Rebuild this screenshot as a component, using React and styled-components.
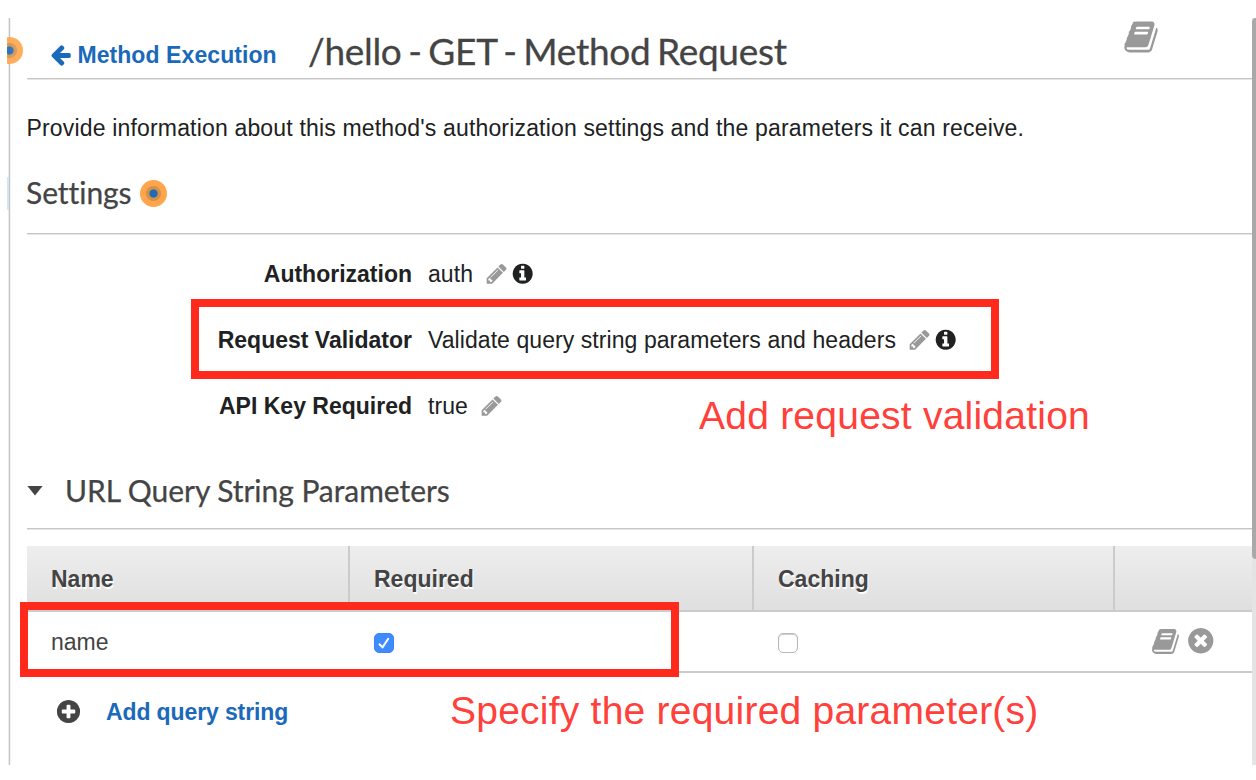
import React from "react";
import styled, { createGlobalStyle } from "styled-components";

const GlobalStyle = createGlobalStyle`
  *, *::before, *::after { box-sizing: border-box; }
  body {
    margin: 0;
    background: #fff;
    color: #202122;
    font-family: "Liberation Sans", Arial, sans-serif;
    font-size: 23px;
    line-height: 28px;
    overflow: hidden;
  }
`;

const CIRCLE =
  "q0 209-103 385.5t-279.5 279.5-385.5 103-385.5-103-279.5-279.5-103-385.5 103-385.5 279.5-279.5 385.5-103 385.5 103 279.5 279.5 103 385.5z";

const PATHS = {
  back: "M1664 896v128q0 53-32.5 90.5t-84.5 37.5h-704l293 294q38 36 38 90t-38 90l-75 76q-37 37-90 37-52 0-91-37l-651-652q-37-37-37-90 0-52 37-91l651-650q38-38 91-38 52 0 90 38l75 74q38 38 38 91t-38 91l-293 293h704q52 0 84.5 37.5t32.5 90.5z",
  book: "M1703 478q40 57 18 129l-275 906q-19 64-76.5 107.5t-122.5 43.5h-923q-77 0-148.5-53.5t-99.5-131.5q-24-67-2-127 0-4 3-27t4-37q1-8-3-21.5t-3-19.5q2-11 8-21t16.5-23.5 16.5-23.5q23-38 45-91.5t30-91.5q3-10 .5-30t-.5-28q3-11 17-28t17-23q21-36 42-92t25-90q1-9-2.5-32t.5-28q4-13 22-30.5t22-22.5q19-26 42.5-84.5t27.5-96.5q1-8-3-25.5t-2-26.5q2-8 9-18t18-23 17-21q8-12 16.5-30.5t15-35 16-36 19.5-32 26.5-23.5 36-11.5 47.5 5.5l-1 3q38-9 51-9h761q74 0 114 56t18 130l-274 906q-36 119-71.5 153.5t-128.5 34.5h-869q-27 0-38 15-11 16-1 43 24 70 144 70h923q29 0 56-15.5t35-41.5l300-987q7-22 5-57 38 15 59 43zm-1064 2q-4 13 2 22.5t20 9.5h608q13 0 25.5-9.5t16.5-22.5l21-64q4-13-2-22.5t-20-9.5h-608q-13 0-25.5 9.5t-16.5 22.5zm-83 256q-4 13 2 22.5t20 9.5h608q13 0 25.5-9.5t16.5-22.5l21-64q4-13-2-22.5t-20-9.5h-608q-13 0-25.5 9.5t-16.5 22.5z",
  pencil: "M491 1536l91-91-235-235-91 91v107h128v128h107zm523-928q0-22-22-22-10 0-17 7l-542 542q-7 7-7 17 0 22 22 22 10 0 17-7l542-542q7-7 7-17zm-54-192l416 416-832 832h-416v-416zm683 96q0 53-37 90l-166 166-416-416 166-165q36-38 90-38 53 0 91 38l235 234q37 39 37 91z",
  info: "M1152 1376v-160q0-14-9-23t-23-9h-96v-512q0-14-9-23t-23-9h-320q-14 0-23 9t-9 23v160q0 14 9 23t23 9h96v320h-96q-14 0-23 9t-9 23v160q0 14 9 23t23 9h448q14 0 23-9t9-23zm-128-896v-160q0-14-9-23t-23-9h-192q-14 0-23 9t-9 23v160q0 14 9 23t23 9h192q14 0 23-9t9-23zm640 416" + CIRCLE,
  plus: "M1344 960v-128q0-26-19-45t-45-19h-256v-256q0-26-19-45t-45-19h-128q-26 0-45 19t-19 45v256h-256q-26 0-45 19t-19 45v128q0 26 19 45t45 19h256v256q0 26 19 45t45 19h128q26 0 45-19t19-45v-256h256q26 0 45-19t19-45zm320-64" + CIRCLE,
  remove: "M1277 1122q0-26-19-45l-181-181 181-181q19-19 19-45 0-27-19-46l-90-90q-19-19-46-19-26 0-45 19l-181 181-181-181q-19-19-45-19-27 0-46 19l-90 90q-19 19-19 46 0 26 19 45l181 181-181 181q-19 19-19 45 0 27 19 46l90 90q19 19 46 19 26 0 45-19l181-181 181 181q19 19 45 19 27 0 46-19l90-90q19-19 19-46zm387-226" + CIRCLE,
};

const Glyph = styled.svg`
  flex: none;
  display: block;
  width: ${(p) => p.$size}px;
  height: ${(p) => p.$size}px;
  fill: ${(p) => p.$color};
`;

const Icon = ({ name, size = 23.4, color = "#999", className }) => (
  <Glyph className={className} $size={size} $color={color} viewBox="0 0 1792 1792" aria-hidden="true">
    <path d={PATHS[name]} />
  </Glyph>
);

const Page = styled.div`
  position: relative;
  display: flex;
  width: 1256px;
  height: 765px;
  padding: 18px 0 0 9px;
  overflow: hidden;
`;

const Content = styled.main`
  flex: 1;
  border-left: 1px solid #c4c4c4;
  box-shadow: -1px 0 #ececec, inset 1px 0 #f4f4f4;
  padding-left: 17px;
`;

const Scrollbar = styled.div`
  flex: none;
  width: 4px;
  background: #e4e4e4;
`;

const Thumb = styled.div`
  height: 541px;
  background: #a9a9a9;
  border-radius: 4px 0 0 4px;
`;

const Header = styled.header`
  display: flex;
  height: 61px;
  border-bottom: 1px solid #c6c6c6;
  box-shadow: 0 1px #e6e6e6;
  padding-left: 22px;
`;

const BackLink = styled.a`
  display: flex;
  align-items: center;
  height: 28px;
  margin-top: 23px;
  width: 259px;
  color: #1a69bb;
  font-weight: bold;
  letter-spacing: 0.08px;
  white-space: nowrap;
`;

const BackIcon = styled(Icon)`
  margin-right: 5px;
`;

const Title = styled.h1`
  flex: 1;
  margin: 11px 0 0;
  font: 400 37px/44px Lato, sans-serif;
  font-variant-ligatures: none;
  letter-spacing: -0.3px;
  word-spacing: -2.5px;
  color: #444;
  -webkit-text-stroke: 0.3px #444;
  white-space: nowrap;
`;

const HeaderIcon = styled(Icon)`
  margin: 1px 93px 0 0;
`;

const Intro = styled.p`
  margin: 35px 0 0 -0.5px;
  height: 28px;
  letter-spacing: 0.17px;
  white-space: nowrap;
`;

const SectionTitle = styled.div`
  display: flex;
  align-items: center;
  height: ${(p) => p.$height}px;
  padding-top: ${(p) => p.$top || 0}px;
  border-bottom: 1px solid #c6c6c6;
  box-shadow: 0 1px #e6e6e6;
`;

const Heading = styled.h2`
  margin: 0 0 0 -1px;
  font: 400 30px/36px Lato, sans-serif;
  font-variant-ligatures: none;
  letter-spacing: -0.05px;
  color: #444;
  -webkit-text-stroke: 0.25px #444;
  white-space: nowrap;
`;

const Marker = styled.span`
  flex: none;
  width: 27px;
  height: 27px;
  margin: 4px 0 0 8px;
  border-radius: 50%;
  background: radial-gradient(circle, #1f69b5 0 3.6px, #d3914a 4.6px 7px, #ffa64d 8px);
`;

const Caret = styled.span`
  width: 16px;
  height: 10px;
  margin: 2px 23px 0 0;
  background: #444;
  clip-path: polygon(0 0, 100% 0, 50% 100%);
`;

const Settings = styled.dl`
  margin: 0;
  padding-top: 7px;
  height: 217px;
`;

const Setting = styled.div`
  display: flex;
  align-items: center;
  height: 66px;
`;

const Label = styled.dt`
  width: 385px;
  text-align: right;
  font-weight: bold;
  white-space: nowrap;
`;

const Value = styled.dd`
  display: flex;
  align-items: center;
  margin: 0 0 0 16px;
  letter-spacing: 0.07px;
  white-space: nowrap;
`;

const EditIcon = styled(Icon)`
  margin-left: 12px;
`;

const InfoIcon = styled(Icon)`
  margin-left: 3px;
`;

const Table = styled.div`
  margin-top: 17px;
  color: #444;
`;

const Row = styled.div`
  display: grid;
  grid-template-columns: 323px 404px 361px 1fr;
`;

const HeadRow = styled(Row)`
  height: 66px;
  border-bottom: 2px solid #cbcbcb;
  background: linear-gradient(#eee, #dfdfdf);
`;

const HeadCell = styled.div`
  padding: 19px 0 0 24px;
  border-right: 2px solid #cbcbcb;
  font-weight: bold;
  text-shadow: 1px 2px 1px #fff;

  &:last-child { border-right: 0; }
`;

const BodyRow = styled(Row)`
  height: 61px;
  border-bottom: 2px solid #cbcbcb;
`;

const Cell = styled.div`
  display: flex;
  align-items: center;
  padding-left: 24px;
`;

const Actions = styled(Cell)`
  padding: 0 0 1px 36px;
  gap: 5.5px;
`;

const CheckBox = styled.span`
  width: 20px;
  height: 20px;
  margin-top: 3px;
  border-radius: 5px;
  border: 1px solid ${(p) => (p.$checked ? "#3b86fb" : "#b8b8b8")};
  background: ${(p) => (p.$checked ? "#3f8afc" : "#fff")};
  box-shadow: ${(p) => (p.$checked ? "none" : "inset 0 1px 1px #ccc")};

  svg { display: block; }
`;

const AddRow = styled.div`
  display: flex;
  align-items: center;
  height: 78px;
  padding-left: 28px;
  color: #1a69bb;
  font-weight: bold;
  letter-spacing: -0.12px;
`;

const AddIcon = styled(Icon)`
  margin: 0 24px 1px 0;
`;

const EdgeMarker = styled.div`
  position: absolute;
  left: 7px;
  top: 37px;
  width: 15.5px;
  height: 27px;
  overflow: hidden;
  display: flex;
  justify-content: flex-end;
  opacity: 0.9;

  ${Marker} { margin: 0; }
`;

const EdgeTab = styled.div`
  position: absolute;
  left: 7px;
  top: 177px;
  width: 2px;
  height: 33px;
  background: #d4e6f5;
`;

const Highlight = styled.div`
  position: absolute;
  left: ${(p) => p.$x}px;
  top: ${(p) => p.$y}px;
  width: ${(p) => p.$w}px;
  height: ${(p) => p.$h}px;
  border: 8px solid #ff2a1c;
`;

const Note = styled.div`
  position: absolute;
  left: ${(p) => p.$x}px;
  top: ${(p) => p.$y}px;
  font-size: 39px;
  line-height: 46px;
  letter-spacing: 0.23px;
  color: #ff403b;
  white-space: nowrap;
`;

const settings = [
  { label: "Authorization", value: "auth", info: true },
  { label: "Request Validator", value: "Validate query string parameters and headers", info: true },
  { label: "API Key Required", value: "true", info: false },
];

export default function App() {
  return (
    <Page>
      <GlobalStyle />
      <Content>
        <Header>
          <BackLink>
            <BackIcon name="back" color="#1a69bb" />
            Method Execution
          </BackLink>
          <Title>/hello - GET - Method Request</Title>
          <HeaderIcon name="book" size={36} />
        </Header>
        <Intro>Provide information about this method's authorization settings and the parameters it can receive.</Intro>
        <SectionTitle $height={92} $top={8}>
          <Heading>Settings</Heading>
          <Marker />
        </SectionTitle>
        <Settings>
          {settings.map((s) => (
            <Setting key={s.label}>
              <Label>{s.label}</Label>
              <Value>
                {s.value}
                <EditIcon name="pencil" />
                {s.info && <InfoIcon name="info" color="#202122" />}
              </Value>
            </Setting>
          ))}
        </Settings>
        <SectionTitle $height={78}>
          <Caret />
          <Heading>URL Query String Parameters</Heading>
        </SectionTitle>
        <Table>
          <HeadRow>
            <HeadCell>Name</HeadCell>
            <HeadCell>Required</HeadCell>
            <HeadCell>Caching</HeadCell>
            <HeadCell />
          </HeadRow>
          <BodyRow>
            <Cell>name</Cell>
            <Cell>
              <CheckBox $checked>
                <svg width="18" height="18" viewBox="0 0 18 18" fill="none" stroke="#fff" strokeWidth="2" strokeLinecap="round" strokeLinejoin="round">
                  <path d="M4.5 10.2 7.5 13.4 13.2 4.8" />
                </svg>
              </CheckBox>
            </Cell>
            <Cell>
              <CheckBox />
            </Cell>
            <Actions>
              <Icon name="book" size={29} />
              <Icon name="remove" size={29.5} />
            </Actions>
          </BodyRow>
        </Table>
        <AddRow>
          <AddIcon name="plus" size={27} color="#444" />
          Add query string
        </AddRow>
      </Content>
      <Scrollbar>
        <Thumb />
      </Scrollbar>
      <EdgeMarker>
        <Marker />
      </EdgeMarker>
      <EdgeTab />
      <Highlight $x={191} $y={299} $w={808} $h={80} />
      <Highlight $x={20} $y={602} $w={659} $h={75} />
      <Note $x={699} $y={393}>Add request validation</Note>
      <Note $x={450} $y={688}>Specify the required parameter(s)</Note>
    </Page>
  );
}
